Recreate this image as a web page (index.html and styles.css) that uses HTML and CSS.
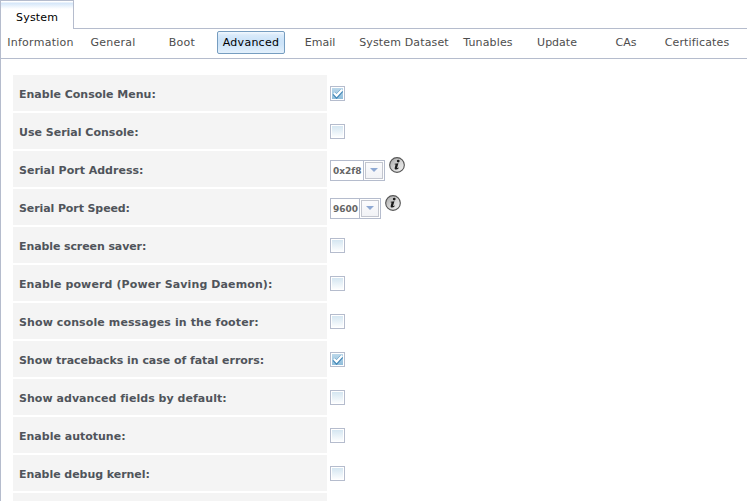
FILE: index.html
```html
<!DOCTYPE html>
<html lang="en">
<head>
<meta charset="utf-8">
<title>System - Advanced</title>
<link rel="stylesheet" href="styles.css">
</head>
<body>
<svg class="defs" width="0" height="0" aria-hidden="true">
  <defs>
    <linearGradient id="ball" x1="0" y1="0" x2="1" y2="1">
      <stop offset="0" stop-color="#a2a2a2"/><stop offset=".5" stop-color="#d4d4d4"/><stop offset="1" stop-color="#f4f4f4"/>
    </linearGradient>
    <symbol id="info" viewBox="0 0 17 17">
      <circle cx="8.5" cy="8.5" r="7.8" fill="url(#ball)" stroke="#555" stroke-width="1.2"/>
      <circle cx="9.8" cy="4.3" r="1.5" fill="#1c1c1c"/>
      <path d="M6 7.2 10 6.6 8.6 11.6Q9 12 10.1 11.1L10.5 11.6Q8.6 13.7 6.8 13.3 5.6 12.9 6.1 11.3L7 8 5.8 7.8Z" fill="#1c1c1c"/>
    </symbol>
    <symbol id="check" viewBox="0 0 11 11">
      <path d="M2 5.4 4.6 8.3 9.8 2.6" fill="none" stroke="#4488b8" stroke-width="3.8"/>
      <path d="M2 4.9 4.6 7.6 10 1.8" fill="none" stroke="#fff" stroke-width="2.2"/>
    </symbol>
  </defs>
</svg>
<div class="app">
  <div class="tabs"><div class="tab">System</div><div class="tab-rest"></div></div>
  <nav class="toolbar">
    <a class="loose">Information</a><a class="loose">General</a><a class="loose">Boot</a><a class="active loose">Advanced</a><a>Email</a><a class="open">System Dataset</a><a class="open">Tunables</a><a>Update</a><a>CAs</a><a class="open">Certificates</a>
  </nav>
  <main class="form">
    <div class="row"><div class="label">Enable Console Menu:</div><div class="field"><span class="box checked"><svg><use href="#check"/></svg></span></div></div>
    <div class="row"><div class="label">Use Serial Console:</div><div class="field"><span class="box"></span></div></div>
    <div class="row"><div class="label">Serial Port Address:</div><div class="field select-field"><div class="select address"><span class="value">0x2f8</span><span class="arrow"></span></div><svg class="info"><use href="#info"/></svg></div></div>
    <div class="row"><div class="label tight">Serial Port Speed:</div><div class="field select-field"><div class="select speed"><span class="value">9600</span><span class="arrow"></span></div><svg class="info"><use href="#info"/></svg></div></div>
    <div class="row"><div class="label tight">Enable screen saver:</div><div class="field"><span class="box"></span></div></div>
    <div class="row"><div class="label wide">Enable powerd (Power Saving Daemon):</div><div class="field"><span class="box"></span></div></div>
    <div class="row"><div class="label wide">Show console messages in the footer:</div><div class="field"><span class="box"></span></div></div>
    <div class="row"><div class="label snug">Show tracebacks in case of fatal errors:</div><div class="field"><span class="box checked"><svg><use href="#check"/></svg></span></div></div>
    <div class="row"><div class="label airy">Show advanced fields by default:</div><div class="field"><span class="box"></span></div></div>
    <div class="row"><div class="label">Enable autotune:</div><div class="field"><span class="box"></span></div></div>
    <div class="row"><div class="label snug">Enable debug kernel:</div><div class="field"><span class="box"></span></div></div>
    <div class="row"><div class="label"></div></div>
  </main>
</div>
</body>
</html>
```
FILE: styles.css
```css
* { box-sizing: border-box; }
body {
  margin: 0;
  background: #fff;
  color: #4d4d4d;
  font: 11px/14px "DejaVu Sans", Verdana, sans-serif;
  overflow: hidden;
}
.defs { display: block; height: 0; }
.app {
  height: 501px;
  overflow: hidden;
  border-left: 1px solid #b5bccd;
}
.tabs { display: flex; height: 29px; }
.tab {
  width: 73px;
  border-top: 1px solid #b5bccd;
  border-right: 1px solid #b5bccd;
  padding: 10px 0 0 15px;
  color: #000;
  letter-spacing: .2px;
  background: linear-gradient(#fff 0, #fff 1px, #d4e6f9 2px, #fff 8px);
}
.tab-rest { flex: 1; border-bottom: 1px solid #b5bccd; }
.toolbar {
  display: grid;
  grid-template-columns: 75px repeat(4, 68px) 98px repeat(3, 68px) 72px;
  align-items: start;
  gap: 1px;
  height: 30px;
  padding: 2px 0 0 2px;
  border-bottom: 1px solid #b5bccd;
}
.toolbar a {
  height: 23px;
  padding-top: 4px;
  border: 1px solid transparent;
  border-radius: 2px;
  text-align: center;
  white-space: nowrap;
}
.toolbar .loose { letter-spacing: .26px; }
.toolbar .open { letter-spacing: .14px; }
.toolbar .active {
  color: #000;
  border-color: #769dc0;
  background: linear-gradient(#f3f9ff 0, #d9eafa 3px, #cde4f9 8px, #cde4f9 12px, #e3f0fc 100%);
}
.form {
  display: grid;
  gap: 2px;
  padding: 16px 0 0 12px;
}
.row { display: flex; height: 36px; }
.label {
  width: 314px;
  padding: 13px 6px 0;
  background: #f4f4f4;
  color: #50545b;
  font-weight: bold;
}
.label.wide { letter-spacing: .11px; }
.label.airy { letter-spacing: .04px; }
.label.snug { letter-spacing: -.05px; }
.label.tight { letter-spacing: -.1px; }
.field { padding: 11px 0 0 3px; }
.box {
  display: block;
  width: 15px;
  height: 15px;
  padding: 1px;
  border: 1px solid #b5bccd;
  background: linear-gradient(#d5e6f1, #fbfdfe) content-box, #fff;
}
.box.checked { background: linear-gradient(#bcd8ea, #8fbddb) content-box, #fff; }
.box svg { display: block; width: 11px; height: 11px; }
.select-field { display: flex; gap: 4px; padding-top: 5px; }
.select {
  display: flex;
  height: 21px;
  margin-top: 4px;
  border: 1px solid #b5bccd;
}
.address { width: 55px; }
.speed { width: 51px; }
.value {
  flex: 1;
  padding: 3px 0 0 2px;
  font-size: 9px;
  font-weight: bold;
  color: #666;
  white-space: nowrap;
}
.arrow {
  width: 21px;
  padding: 7px 0 0 6px;
  border-left: 1px solid #b5bccd;
  background: linear-gradient(#fdfdfe, #f0f1f5);
  box-shadow: inset 0 0 0 1px #fff, inset 0 0 0 2px #c3c6cf;
}
.arrow::before {
  content: "";
  display: block;
  width: 0;
  border: 4px solid transparent;
  border-top-color: #8fa9d3;
  border-bottom: 0;
}
.info { width: 16px; height: 16px; margin-top: 1px; }
```
